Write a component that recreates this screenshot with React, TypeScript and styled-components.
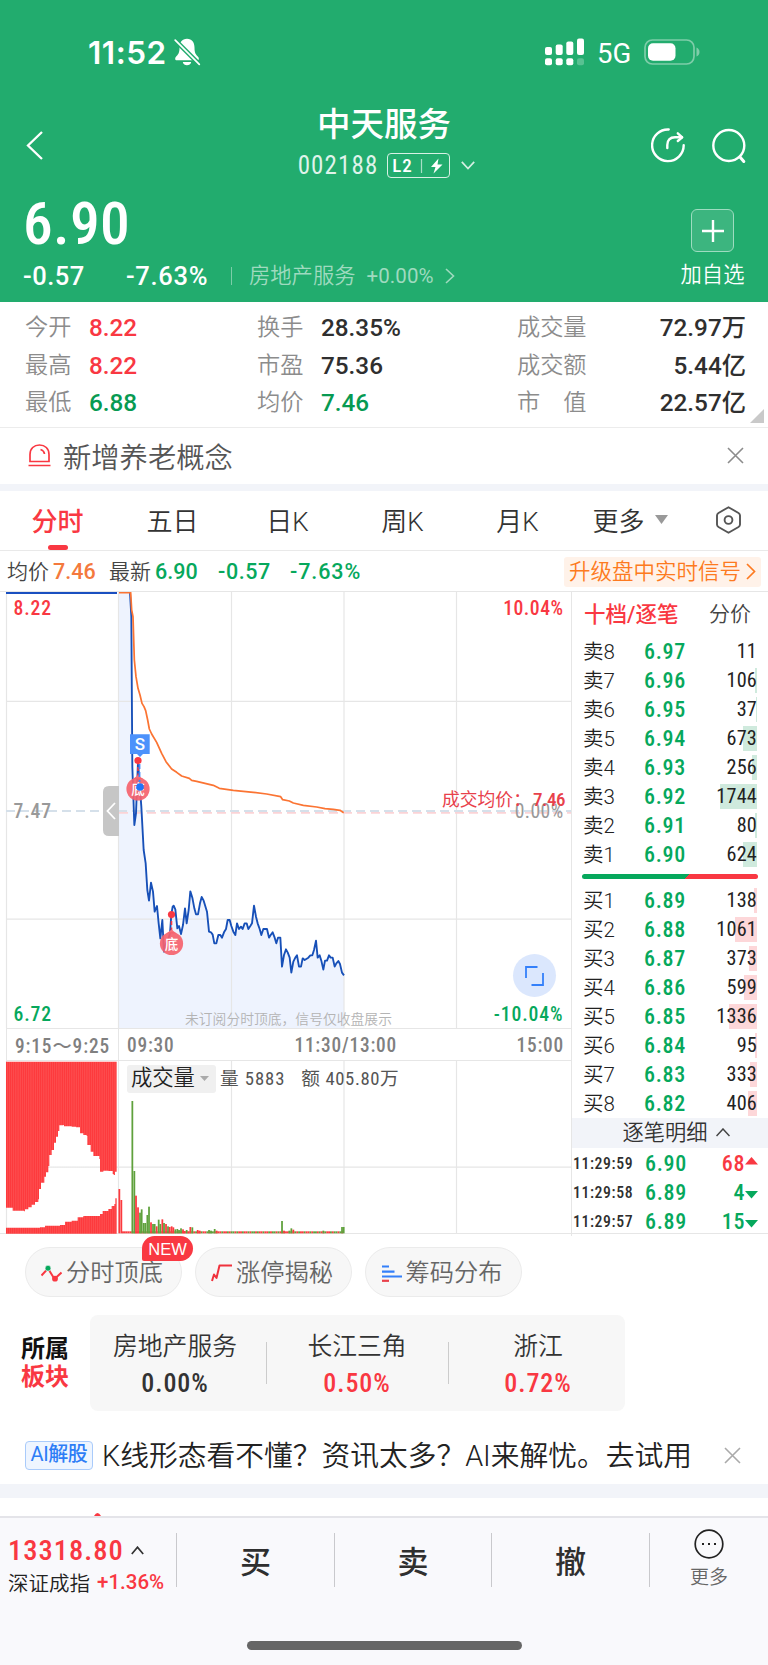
import React from "react";
import styled, { createGlobalStyle, css } from "styled-components";

const RED = "#f93842";
const GREEN = "#06a85c";
const INK = "#2f2f2f";
const GREY = "#8c8c8c";
const LINE = "#e6e6e6";

const GlobalStyle = createGlobalStyle`
  *, *::before, *::after { box-sizing: border-box; }
  body {
    margin: 0;
    background: #fff;
    font-family: Roboto, "Noto Sans CJK SC", sans-serif;
    color: ${INK};
  }
  svg { display: block; flex: none; }
`;

const Screen = styled.main`
  width: 768px;
  height: 1665px;
  display: flex;
  flex-direction: column;
  overflow: hidden;
  background: #fff;
`;

/* Shared text atoms */

const Num = styled.span<{ $size: number; $ls?: number; $color?: string; $weight?: number; $wide?: boolean }>`
  font-stretch: ${(p) => (p.$wide ? "100%" : "75%")};
  font-size: ${(p) => p.$size}px;
  letter-spacing: ${(p) => p.$ls ?? (p.$wide ? 0 : 1)}px;
  font-weight: ${(p) => p.$weight ?? 500};
  color: ${(p) => p.$color ?? "inherit"};
  white-space: nowrap;
`;

/* Header */

const Header = styled.header`
  height: 302px;
  background: #22ac6e;
  color: #fff;
  display: flex;
  flex-direction: column;
`;

const StatusBar = styled.div`
  height: 104px;
  padding: 0 68px 0 88px;
  display: flex;
  align-items: center;
`;

const Clock = styled.span`
  font-family: Inter, sans-serif;
  font-weight: 600;
  font-size: 31.5px;
  letter-spacing: 0.5px;
  line-height: 40px;
  width: 86px;
  padding-top: 2px;
  white-space: nowrap;
`;

const StatusRight = styled.div`
  margin-left: auto;
  display: flex;
  align-items: center;
`;

const Network = styled.span`
  width: 35px;
  font-size: 27.5px;
  line-height: 40px;
  margin: 3px 12px 0 13px;
`;

const TitleBar = styled.div`
  height: 84px;
  padding: 0 22px 0 26px;
  display: grid;
  grid-template-columns: 102px 1fr 106px;
`;

const BackSlot = styled.div`
  padding-top: 27px;
`;

const TitleActions = styled.div`
  display: flex;
  justify-content: flex-end;
  gap: 27px;
  padding-top: 24px;
`;

const TitleBlock = styled.div`
  display: flex;
  flex-direction: column;
  align-items: center;
`;

const StockName = styled.h1`
  margin: 0;
  font-size: 33.5px;
  font-weight: 500;
  line-height: 42px;
`;

const CodeRow = styled.div`
  height: 39px;
  display: flex;
  align-items: center;
  gap: 9px;
  padding-left: 5px;
`;

const LevelBadge = styled.span`
  width: 63px;
  height: 25px;
  border: 1.5px solid #d8f1e5;
  border-radius: 4px;
  display: flex;
  align-items: center;
  padding-left: 4px;
  margin-right: 2px;
`;

const Quote = styled.div`
  flex: 1;
  display: flex;
  justify-content: space-between;
  padding: 0 23px 0 23px;
`;

const QuotePrice = styled.div`
  height: 69px;
  line-height: 73px;
`;

const QuoteChange = styled.div`
  display: flex;
  align-items: center;
  height: 38px;
`;

const ChangeCell = styled.span<{ $w: number }>`
  width: ${(p) => p.$w}px;
`;

const Industry = styled.span`
  display: flex;
  align-items: center;
  border-left: 1px solid #7ccda8;
  height: 18px;
  padding-left: 17px;
  font-size: 21.3px;
  line-height: 24px;
  font-weight: 350;
  color: #9fdabf;
  gap: 11px;
`;

const Watch = styled.div`
  display: flex;
  flex-direction: column;
  align-items: center;
  padding-top: 21px;
  width: 65px;
  font-size: 21.3px;
  font-weight: 350;
  white-space: nowrap;
  line-height: 30px;
  gap: 8px;
`;

const WatchBox = styled.span`
  width: 43px;
  height: 43px;
  border: 1px solid #9edcc0;
  border-radius: 6px;
  background: #3cb57f;
  display: grid;
  place-items: center;
`;

/* Statistics */

const Stats = styled.section`
  height: 126px;
  padding: 7px 22px 0 25px;
  border-bottom: 1.5px solid #ececec;
  position: relative;
`;

const StatRow = styled.div`
  height: 37.5px;
  display: grid;
  grid-template-columns: 64px 168px 64px 196px 1fr;
  align-items: center;
  line-height: 37px;
`;

const StatLabel = styled.span`
  font-size: 23.2px;
  font-weight: 350;
  color: ${GREY};
  white-space: pre;
`;

const StatLast = styled.div`
  display: flex;
  justify-content: space-between;
`;

const Corner = styled.i`
  position: absolute;
  right: 4px;
  bottom: 4px;
  border-left: 14px solid transparent;
  border-bottom: 14px solid #c9c9c9;
`;

/* Notice */

const Notice = styled.section`
  height: 56px;
  padding: 0 24px 2px 28px;
  display: flex;
  align-items: center;
  font-size: 28.3px;
  font-weight: 350;
  color: #555;
  gap: 12px;
  svg:last-child { margin-left: auto; }
`;

const Band = styled.div<{ $h: number }>`
  height: ${(p) => p.$h}px;
  flex: none;
  background: #f2f4f9;
`;

/* Tabs */

const Tabs = styled.nav`
  height: 60px;
  border-bottom: 1.5px solid #e9e9e9;
  display: grid;
  grid-template-columns: 115px 115px 115px 115px 115px 110px 87px;
`;

const Tab = styled.span<{ $on?: boolean }>`
  display: flex;
  justify-content: center;
  align-items: center;
  gap: 10px;
  padding-bottom: 2px;
  position: relative;
  font-size: 26px;
  font-weight: ${(p) => (p.$on ? 500 : 350)};
  color: ${(p) => (p.$on ? RED : "#333")};
  white-space: nowrap;
  ${(p) =>
    p.$on &&
    css`
      &::after {
        content: "";
        position: absolute;
        bottom: 0;
        width: 20px;
        height: 5px;
        border-radius: 3px;
        background: ${RED};
      }
    `}
`;

const InfoBar = styled.div`
  height: 41px;
  padding: 2px 7px 0 7px;
  display: flex;
  align-items: center;
  border-bottom: 1px solid ${LINE};
  font-size: 21px;
  font-weight: 350;
  line-height: 24px;
  color: #444;
  white-space: nowrap;
`;

const InfoCell = styled.span<{ $w: number }>`
  width: ${(p) => p.$w}px;
  display: flex;
  gap: 4px;
`;

const Upgrade = styled.span`
  margin-left: auto;
  width: 197px;
  height: 30px;
  border-radius: 3px;
  background: #fff2e9;
  color: #fd7a20;
  font-size: 21.5px;
  padding: 0 5px 1px 5px;
  display: flex;
  justify-content: space-between;
  align-items: center;
`;

/* Chart area */

const Market = styled.section`
  height: 642px;
  display: grid;
  grid-template-columns: 571px 197px;
  border-bottom: 1px solid ${LINE};
`;

const Charts = styled.div`
  display: flex;
  flex-direction: column;
  position: relative;
`;

const Axis = styled.div`
  height: 33px;
  margin-left: 6px;
  border: 1px solid ${LINE};
  border-right: 0;
  display: flex;
  align-items: stretch;
  color: #808080;
`;

const AuctionSpan = styled.span`
  width: 112px;
  display: flex;
  align-items: center;
  justify-content: center;
  border-right: 1px solid ${LINE};
`;

const SessionSpan = styled.span`
  flex: 1;
  display: flex;
  align-items: center;
  padding: 1px 7px 0 8px;
`;

const MiddayMark = styled.span`
  margin: 0 auto 0 120px;
`;

const VolumeLegend = styled.div`
  position: absolute;
  left: 127px;
  top: 473px;
  height: 28px;
  display: flex;
  align-items: center;
  color: #555;
  font-size: 18px;
  line-height: 24px;
  gap: 16px;
`;

const VolumePick = styled.span`
  width: 89px;
  height: 28px;
  border-radius: 3px;
  background: #f0f0f0;
  color: #222;
  font-size: 21.3px;
  font-weight: 350;
  display: flex;
  align-items: center;
  gap: 5px;
  padding: 0 0 2px 4px;
  margin-right: -12px;
`;

const Book = styled.aside`
  border-left: 1px solid ${LINE};
  display: flex;
  flex-direction: column;
`;

const BookTabs = styled.div`
  height: 45px;
  padding: 0 17px 5px 12px;
  display: flex;
  justify-content: space-between;
  align-items: center;
  font-size: 21px;
  font-weight: 350;
  color: #444;
  b { font-weight: 500; color: ${RED}; font-size: 21.5px; }
`;

const Level = styled.div`
  height: 29px;
  margin: 0 11px 0 11px;
  display: grid;
  grid-template-columns: 61px 1fr 62px;
  align-items: center;
  font-size: 20.5px;
  font-weight: 350;
  line-height: 26px;
  color: #222;
  white-space: nowrap;
`;

const Depth = styled.span<{ $buy?: boolean; $w: number }>`
  height: 25px;
  line-height: 25px;
  text-align: right;
  background: linear-gradient(${(p) => (p.$buy ? "#fdd7d9, #fdd7d9" : "#cfeadd, #cfeadd")}) right / ${(p) => p.$w}px 100% no-repeat;
`;

const Ratio = styled.div`
  height: 5px;
  flex: none;
  margin: 5px 10px 7px 10px;
  border-radius: 3px;
  background: linear-gradient(135deg, ${GREEN} 59.5%, ${RED} 59.5%);
`;

const TickHead = styled.div`
  height: 30px;
  margin-bottom: 1px;
  background: #f2f4f9;
  display: flex;
  align-items: center;
  justify-content: center;
  gap: 8px;
  font-size: 21.3px;
  font-weight: 350;
  line-height: 28px;
  color: #333;
  padding: 0 0 1px 12px;
`;

const Tick = styled.div`
  height: 29px;
  padding: 0 10px 0 1px;
  display: grid;
  grid-template-columns: 72px 62px 1fr;
  align-items: center;
`;

const TickVol = styled.span`
  display: flex;
  align-items: center;
  justify-content: flex-end;
`;

/* Chips */

const Chips = styled.section`
  height: 64px;
  padding: 13px 25px 0;
  display: flex;
  gap: 13px;
`;

const Chip = styled.span`
  width: 157px;
  height: 50px;
  border: 1.5px solid #ebebeb;
  border-radius: 25px;
  background: #f7f7f7;
  display: flex;
  align-items: center;
  justify-content: center;
  gap: 4px;
  font-size: 24.2px;
  font-weight: 350;
  line-height: 34px;
  color: #666;
  position: relative;
  white-space: nowrap;
  padding: 2px 3px 0 0;
`;

const NewTag = styled.span`
  position: absolute;
  left: 116px;
  top: -12px;
  width: 51px;
  height: 25px;
  border-radius: 13px 13px 13px 2px;
  background: ${RED};
  color: #fff;
  font: 400 16.5px/26px "Liberation Sans", sans-serif;
  text-align: center;
`;

/* Sector */

const Sector = styled.section`
  height: 129px;
  padding: 17px 0 0 21px;
  display: flex;
`;

const SectorTitle = styled.div`
  width: 69px;
  padding-top: 20px;
  font-size: 24px;
  font-weight: 700;
  line-height: 28px;
  color: #111;
  em { font-style: normal; color: ${RED}; display: block; }
`;

const SectorCard = styled.div`
  width: 535px;
  height: 96px;
  border-radius: 8px;
  background: #f7f7f7;
  display: grid;
  grid-template-columns: 176px 182px 1fr;
`;

const SectorItem = styled.div`
  display: flex;
  flex-direction: column;
  align-items: center;
  padding-top: 13px;
  font-size: 24.8px;
  font-weight: 350;
  line-height: 37px;
  color: #333;
  position: relative;
  &:nth-child(1) { padding-right: 6px; }
  &:nth-child(3) { padding-left: 3px; }
  & + &::before {
    content: "";
    position: absolute;
    left: 0;
    top: 27px;
    height: 42px;
    border-left: 1px solid #ccc;
  }
`;

/* AI promo */

const Promo = styled.section`
  height: 57px;
  padding: 0 27px 1px 25px;
  display: flex;
  align-items: center;
  font-size: 28.75px;
  font-weight: 350;
  line-height: 34px;
  color: #222;
  white-space: nowrap;
  svg { margin-left: auto; }
`;

const PromoText = styled.span`
  padding-top: 2px;
`;

const PromoTag = styled.span`
  width: 68px;
  height: 29px;
  border: 1.5px solid #a9cbfb;
  border-radius: 4px;
  background: #eef5ff;
  color: #2d7df6;
  font-size: 20px;
  font-weight: 450;
  line-height: 25px;
  text-align: center;
  margin-right: 9px;
  letter-spacing: -0.4px;
`;

const Peek = styled.div`
  height: 18px;
  display: flex;
  align-items: flex-end;
  padding-left: 94px;
`;

/* Trade bar */

const TradeBar = styled.footer`
  flex: 1;
  border-top: 2px solid #e4e4e9;
  background: #f9f9fc;
  display: flex;
  flex-direction: column;
  align-items: center;
`;

const TradeRow = styled.div`
  width: 768px;
  height: 84px;
  display: grid;
  grid-template-columns: 176px 158px 157px 158px 1fr;
`;

const IndexBox = styled.div`
  padding: 14px 0 0 8px;
  font-size: 20.5px;
  font-weight: 350;
  color: #222;
  white-space: nowrap;
`;

const IndexLine = styled.div<{ $h: number }>`
  height: ${(p) => p.$h}px;
  display: flex;
  align-items: center;
  gap: 7px;
`;

const TradeCell = styled.div`
  margin-top: 15px;
  height: 54px;
  border-left: 1px solid #c9c9cd;
  display: flex;
  align-items: center;
  justify-content: center;
  padding-bottom: 2px;
  font-size: 31px;
  font-weight: 500;
`;

const MoreCell = styled(TradeCell)`
  flex-direction: column;
  gap: 6px;
  padding-bottom: 0;
  font-size: 19px;
  font-weight: 350;
  line-height: 26px;
  color: #666;
`;

const HomeBar = styled.div`
  margin-top: 39px;
  width: 275px;
  height: 9px;
  border-radius: 5px;
  background: #666;
`;

/* Data */

const asks: [string, string, number, number][] = [
  ["卖8", "6.97", 11, 0],
  ["卖7", "6.96", 106, 2],
  ["卖6", "6.95", 37, 1],
  ["卖5", "6.94", 673, 14],
  ["卖4", "6.93", 256, 5],
  ["卖3", "6.92", 1744, 37],
  ["卖2", "6.91", 80, 2],
  ["卖1", "6.90", 624, 14],
];

const bids: [string, string, number, number][] = [
  ["买1", "6.89", 138, 3],
  ["买2", "6.88", 1061, 22],
  ["买3", "6.87", 373, 8],
  ["买4", "6.86", 599, 13],
  ["买5", "6.85", 1336, 28],
  ["买6", "6.84", 95, 2],
  ["买7", "6.83", 333, 7],
  ["买8", "6.82", 406, 9],
];

const ticks: [string, string, number, boolean][] = [
  ["11:29:59", "6.90", 68, true],
  ["11:29:58", "6.89", 4, false],
  ["11:29:57", "6.89", 15, false],
];

const PRICE =
  "390,38 394,110 397,560 403,735 408,700 414,545 418,600 424,680 431,810 437,850 442,930 447,962 453,908 459,935 464,995 471,978 476,1030 481,1075 487,1020 492,1115 498,1090 504,1080 510,1060 514,1003 518,980 521,977 526,988 532,1045 537,1038 543,1062 549,1035 555,985 560,1030 566,990 571,934 577,953 583,985 588,1003 594,1003 600,970 605,951 611,962 621,995 627,1055 633,1057 638,1064 643,1090 649,1090 655,1065 661,1065 666,1073 672,1057 678,1047 683,1020 689,1020 694,1038 700,1055 706,1065 711,1030 717,1047 723,1040 728,1047 734,1030 740,1030 745,1047 751,1038 756,1030 762,977 768,1010 773,1030 779,1047 784,1065 790,1047 801,1047 807,1073 812,1065 818,1057 824,1073 829,1090 834,1073 841,1073 846,1160 852,1125 858,1108 863,1117 869,1133 874,1178 880,1145 886,1133 891,1126 897,1160 903,1160 908,1135 914,1140 925,1133 931,1126 937,1126 942,1110 948,1082 953,1133 959,1126 964,1142 970,1169 975,1142 981,1142 987,1126 992,1133 998,1133 1004,1160 1009,1150 1015,1143 1020,1152 1026,1178 1032,1186";

const AVERAGE =
  "357,38 392,38 395,90 399,110 403,240 408,290 414,325 420,345 426,370 432,380 437,392 443,420 448,447 455,462 470,487 485,520 498,545 515,567 530,577 545,588 568,595 575,601 590,604 640,616 658,625 700,631 760,637 800,642 842,650 848,659 868,663 880,669 910,676 950,681 975,686 1000,688 1020,691 1031,698";

type Pt = [number, number];

const auctionTop: Pt[] = [
  [18, 563], [38, 572], [72, 574], [75, 568], [85, 562], [95, 554], [105, 546], [115, 538], [117, 507], [123, 488],
  [133, 470], [138, 457], [145, 438], [148, 405], [155, 390], [162, 368], [168, 350], [174, 333], [178, 316], [190, 315],
  [192, 319], [215, 320], [228, 322], [238, 322], [240, 340], [250, 345], [260, 348], [262, 375], [272, 395], [280, 408],
  [298, 417], [300, 455], [310, 452], [325, 453], [338, 462], [341, 465], [345, 455], [350, 452],
];

const auctionBottom: Pt[] = [
  [18, 623], [50, 623], [120, 622], [135, 617], [180, 615], [195, 605], [215, 602], [233, 592], [250, 588],
  [300, 582], [308, 573], [325, 567], [335, 558], [343, 552], [346, 535], [350, 535],
];

const stepPath = (pts: Pt[], base: number) => {
  let d = `M${pts[0][0]},${base}`;
  pts.forEach(([x, y], i) => {
    d += `L${x},${y}`;
    if (pts[i + 1]) d += `L${pts[i + 1][0]},${y}`;
  });
  return `${d}L${pts[pts.length - 1][0]},${base}Z`;
};

const VOL: [number, number, "r" | "g"][] = [
  [358, 507, "r"], [364, 540, "r"], [397, 243, "g"], [403, 453, "g"], [408, 527, "r"], [414, 562, "r"],
  [420, 578, "g"], [425, 568, "g"], [431, 609, "g"], [436, 609, "g"], [442, 585, "g"], [447, 560, "g"],
  [453, 607, "r"], [459, 612, "g"], [464, 612, "g"], [470, 619, "r"], [476, 599, "g"], [481, 612, "g"],
  [487, 598, "r"], [492, 609, "g"], [498, 612, "r"], [504, 619, "g"], [509, 621, "r"], [515, 619, "r"],
  [520, 622, "r"], [526, 628, "g"], [532, 627, "g"], [537, 630, "g"], [543, 625, "g"], [549, 628, "r"],
  [554, 633, "r"], [560, 630, "g"], [565, 635, "r"], [571, 621, "r"], [577, 622, "g"], [593, 630, "r"],
  [599, 632, "r"], [627, 630, "g"], [633, 632, "g"], [644, 627, "g"], [650, 632, "r"], [846, 603, "g"],
  [852, 632, "r"], [868, 632, "g"], [874, 625, "g"], [880, 629, "r"], [970, 632, "g"], [1026, 621, "g"],
  [1031, 621, "g"],
];

const quiet = Array.from({ length: 118 }, (_, i) => {
  const x = 369 + i * 5.62;
  return { x, red: x < 392 || (i * 7) % 11 < 6 };
});

const Caret = ({ w, h, d, color, sw = 2 }: { w: number; h: number; d: string; color: string; sw?: number }) => (
  <svg width={w} height={h} viewBox={`0 0 ${w} ${h}`} fill="none" stroke={color} strokeWidth={sw}>
    <path d={d} />
  </svg>
);

const Close = ({ color }: { color: string }) => <Caret w={17} h={17} color={color} sw={1.6} d="M1 1L16 16M16 1L1 16" />;

const Bottom = ({ x, y, tip }: { x: number; y: number; tip: number }) => (
  <g>
    <line x1={x} y1={tip} x2={x} y2={y - 10} stroke={RED} strokeWidth="1.6" strokeDasharray="4 2.5" />
    <path d={`M${x - 5} ${y - 10}L${x} ${y - 14}L${x + 5} ${y - 10}Z`} fill="#f7707a" />
    <circle cx={x} cy={y} r="11.6" fill="#f5636e" fillOpacity="0.92" />
    <text x={x} y={y + 5} fontSize="13.5" fontWeight="500" fill="#fff" textAnchor="middle">
      底
    </text>
    <circle cx={x} cy={tip} r="3.6" fill={RED} />
  </g>
);

const Label = styled.text<{ $ls?: number; $size?: number; $weight?: number }>`
  font-stretch: 75%;
  font-weight: ${(p) => p.$weight ?? 500};
  font-size: ${(p) => p.$size ?? 19.7}px;
  letter-spacing: ${(p) => p.$ls ?? 0.9}px;
`;

const PriceChart = () => (
  <svg width="571" height="436" viewBox="0 0 571 436">
    <polygon
      transform="translate(0 -12) scale(0.33333)"
      points={`357,38 ${PRICE} 1032,1344 357,1344`}
      fill="#eef3fe"
    />
    <g stroke={LINE} strokeWidth="1.2">
      <path d="M6.5 0V436M118.5 0V436M231.5 0V436M344 0V436M456.5 0V436M6 109.3H571M6 327.2H571" fill="none" />
    </g>
    <path d="M6 219H571" stroke="#d5e0ea" strokeWidth="1.8" strokeDasharray="9 5" />
    <path d="M119 220.8H571" stroke="#fbd3d6" strokeWidth="1.8" strokeDasharray="9 5" />
    <path d="M6 0.8H117" stroke="#1a4fc0" strokeWidth="2.6" />
    <g transform="translate(0 -12) scale(0.33333)" fill="none" strokeLinejoin="round">
      <polyline points={PRICE} stroke="#1750b8" strokeWidth="5.6" />
      <polyline points={AVERAGE} stroke="#fb7433" strokeWidth="5.2" />
    </g>
    <path d="M119 194V244H109Q103 244 103 238V200Q103 194 109 194Z" fill="#c6c6c6" />
    <path d="M115 211L107.5 219L115 227" fill="none" stroke="#fff" strokeWidth="1.8" />
    <Bottom x={138} y={197} tip={168.5} />
    <path d="M139.5 172V190" stroke="#3f87fb" strokeWidth="1.8" strokeDasharray="5 3" />
    <circle cx="140" cy="195" r="3.8" fill="#1f74fa" />
    <path d="M130 142.3H149.7V162H143L140 165L137 162H130Z" fill="#4c92fb" />
    <text x="140" y="158" fontSize="17" fontWeight="500" fill="#fff" textAnchor="middle">
      S
    </text>
    <Bottom x={171.5} y={351.5} tip={322.5} />
    <Label x="13.5" y="23" fill={RED}>8.22</Label>
    <Label x="563.5" y="23" fill={RED} textAnchor="end" $ls={0.5}>10.04%</Label>
    <Label x="13.5" y="226" fill="#999">7.47</Label>
    <Label x="563.5" y="226" fill="#999" textAnchor="end" $ls={0.4} $weight={400}>0.00%</Label>
    <Label x="13.5" y="428.5" fill={GREEN}>6.72</Label>
    <Label x="563.5" y="428.5" fill={GREEN} textAnchor="end">-10.04%</Label>
    <text x="442" y="214" fontSize="17.8" fontWeight="400" fill="#e8414b">成交均价：</text>
    <Label x="533" y="213.5" fill="#e8414b" $size={19} $ls={-0.4}>7.46</Label>
    <text x="185" y="432" fontSize="13.8" fontWeight="350" fill="#b4b4b4">
      未订阅分时顶底，信号仅收盘展示
    </text>
    <circle cx="534.5" cy="383.5" r="21.5" fill="#dbe7fd" />
    <path d="M526 386V375H537.5M543 381V393H531.5" fill="none" stroke="#3480fa" strokeWidth="1.8" />
  </svg>
);

const VolumeChart = () => (
  <svg width="571" height="173" viewBox="0 0 571 173">
    <path d="M6.5 0V173M118.5 0V173M231.5 0V173M344 0V173M456.5 0V173M6 106.2H571" fill="none" stroke={LINE} strokeWidth="1.2" />
    <g transform="translate(0 -41) scale(0.33333)">
      <path d={stepPath(auctionTop, 125)} fill="#fd3a3d" />
      <path d={stepPath(auctionBottom, 641)} fill="#fd3a3d" />
      {Array.from({ length: 59 }, (_, i) => (
        <rect key={i} x={22.5 + i * 5.6} y="125" width="1.2" height="516" fill="#fff" fillOpacity="0.22" />
      ))}
      {quiet.map((q, i) => (
        <rect key={i} x={q.x - 2.8} y="634" width="5.62" height="6" fill={q.red ? "#fb3a3e" : "#5fa13c"} />
      ))}
      {VOL.map(([x, y, c], i) => (
        <rect key={i} x={x - 2.6} y={y} width="5.3" height={640 - y} fill={c === "r" ? "#fb3a3e" : "#5fa13c"} />
      ))}
    </g>
  </svg>
);

const Levels = ({ rows, buy }: { rows: typeof asks; buy?: boolean }) => (
  <>
    {rows.map(([name, price, vol, w]) => (
      <Level key={name}>
        <span>{name}</span>
        <Num $size={22} $ls={0.7} $color={GREEN}>{price}</Num>
        <Depth $buy={buy} $w={w}>
          <Num $size={20.2} $ls={0.2} $weight={400} $color="#222">{vol}</Num>
        </Depth>
      </Level>
    ))}
  </>
);

export default function App() {
  return (
    <Screen>
      <GlobalStyle />
      <Header>
        <StatusBar>
          <Clock>11:52</Clock>
          <svg width="27" height="28" viewBox="0 0 27 28">
            <path
              d="M13 0.800C8 0.800 5.500 4.500 5.500 9.500C5.500 15 4.200 16.500 1.800 19C0.600 20.600 1.200 22.300 3 22.300H23C24.800 22.300 25.400 20.600 24.200 19C21.800 16.500 20.500 15 20.500 9.500C20.500 4.500 18 0.800 13 0.800ZM8.800 24H17.200C16.500 28.300 9.500 28.300 8.800 24Z"
              fill="#fff"
            />
            <path d="M0 1L26.500 27.500" stroke="#22ac6e" strokeWidth="4.600" />
            <path d="M1.200 2.200L25.300 26.300" stroke="#fff" strokeWidth="1.700" strokeLinecap="round" />
          </svg>
          <StatusRight>
            <svg width="39" height="28" viewBox="0 0 39 28" fill="#fff">
              <rect x="0" y="9" width="7" height="8" rx="2" />
              <rect x="10.700" y="6.500" width="7" height="10.500" rx="2" />
              <rect x="21.300" y="3.500" width="7" height="13.500" rx="2" />
              <rect x="32" y="0.500" width="7" height="16.500" rx="2" />
              <rect x="0" y="20.300" width="7" height="7" rx="2" />
              <rect x="10.700" y="20.300" width="7" height="7" rx="2" />
              <rect x="21.300" y="20.300" width="7" height="7" rx="2" />
              <rect x="32" y="20.300" width="7" height="7" rx="2" fillOpacity="0.25" />
            </svg>
            <Network>5G</Network>
            <svg width="56" height="26" viewBox="0 0 56 26">
              <rect x="1" y="1" width="49" height="24" rx="7.500" fill="none" stroke="#7ecda9" strokeWidth="1.700" />
              <rect x="4" y="4.300" width="27.500" height="17.400" rx="5" fill="#fff" />
              <path d="M52.500 8.500Q55.500 10 55.500 13Q55.500 16 52.500 17.500Z" fill="#7ecda9" />
            </svg>
          </StatusRight>
        </StatusBar>

        <TitleBar>
          <BackSlot>
            <Caret w={18} h={29} color="#fff" sw={2.3} d="M16 1L2 14.500L16 28" />
          </BackSlot>
          <TitleBlock>
            <StockName>中天服务</StockName>
            <CodeRow>
              <Num $size={25} $ls={1.1} $weight={400} $color="#dff3ea">002188</Num>
              <LevelBadge>
                <Num $size={19} $ls={0.8}>L2</Num>
                <svg width="34" height="18" viewBox="0 0 34 18">
                  <path d="M8.500 2V16" stroke="#a8dfc6" strokeWidth="1.200" />
                  <path d="M25.500 1.500L18 10H22.500L20.500 16.500L29.500 7.500H24.500Z" fill="#fff" />
                </svg>
              </LevelBadge>
              <Caret w={14} h={9} color="#d4efe2" sw={1.700} d="M0.800 0.800L7 7.500L13.200 0.800" />
            </CodeRow>
          </TitleBlock>
          <TitleActions>
            <svg width="34" height="35" viewBox="0 0 34 35" fill="none" stroke="#fff" strokeWidth="2.400" strokeLinecap="round">
              <path d="M17.700 1.500A15.800 15.800 0 1 0 32.700 17.300" />
              <path d="M16.300 20V17Q16.300 9.300 24 9.300H31" />
              <path d="M26.800 5.300L31.200 9.300L26.800 13" strokeLinejoin="round" />
            </svg>
            <svg width="34" height="36" viewBox="0 0 34 36" fill="none" stroke="#fff" strokeWidth="2.400" strokeLinecap="round">
              <circle cx="16.800" cy="17.500" r="15.500" />
              <path d="M28 29L31.800 33.500" strokeWidth="3" />
            </svg>
          </TitleActions>
        </TitleBar>

        <Quote>
          <div>
            <QuotePrice>
              <Num $size={59.5} $ls={0.3}>6.90</Num>
            </QuotePrice>
            <QuoteChange>
              <ChangeCell $w={103}>
                <Num $wide $size={25.5} $ls={0.5}>-0.57</Num>
              </ChangeCell>
              <ChangeCell $w={105}>
                <Num $wide $size={25.5} $ls={0.7}>-7.63%</Num>
              </ChangeCell>
              <Industry>
                房地产服务
                <Num $wide $size={20.5} $ls={0.1} $weight={400}>+0.00%</Num>
                <Caret w={10} h={16} color="#9fdabf" sw={1.600} d="M1 1L8.500 8L1 15" />
              </Industry>
            </QuoteChange>
          </div>
          <Watch>
            <WatchBox>
              <Caret w={22} h={22} color="#fff" sw={2.400} d="M11 0V22M0 11H22" />
            </WatchBox>
            加自选
          </Watch>
        </Quote>
      </Header>

      <Stats>
        <StatRow>
          <StatLabel>今开</StatLabel>
          <Num $wide $size={24.3} $color={RED}>8.22</Num>
          <StatLabel>换手</StatLabel>
          <Num $wide $size={24.3}>28.35%</Num>
          <StatLast>
            <StatLabel>成交量</StatLabel>
            <Num $wide $size={24.3}>72.97万</Num>
          </StatLast>
        </StatRow>
        <StatRow>
          <StatLabel>最高</StatLabel>
          <Num $wide $size={24.3} $color={RED}>8.22</Num>
          <StatLabel>市盈</StatLabel>
          <Num $wide $size={24.3}>75.36</Num>
          <StatLast>
            <StatLabel>成交额</StatLabel>
            <Num $wide $size={24.3}>5.44亿</Num>
          </StatLast>
        </StatRow>
        <StatRow>
          <StatLabel>最低</StatLabel>
          <Num $wide $size={24.3} $color="#079a52">6.88</Num>
          <StatLabel>均价</StatLabel>
          <Num $wide $size={24.3} $color="#079a52">7.46</Num>
          <StatLast>
            <StatLabel>市　值</StatLabel>
            <Num $wide $size={24.3}>22.57亿</Num>
          </StatLast>
        </StatRow>
        <Corner />
      </Stats>

      <Notice>
        <svg width="23" height="23" viewBox="0 0 23 23" fill="none" stroke={RED} strokeWidth="1.700">
          <path d="M2 17.500V10.500C2 4.500 6 1 11.500 1S21 4.500 21 10.500V17.500ZM0.500 21.500H22.500" />
          <path d="M12.500 5.500Q16 6.500 16.500 10" />
        </svg>
        新增养老概念
        <Close color={GREY} />
      </Notice>
      <Band $h={7} />

      <Tabs>
        <Tab $on>分时</Tab>
        <Tab>五日</Tab>
        <Tab>日K</Tab>
        <Tab>周K</Tab>
        <Tab>月K</Tab>
        <Tab>
          更多
          <svg width="13" height="9" viewBox="0 0 13 9">
            <path d="M0 0H13L6.500 9Z" fill="#999" />
          </svg>
        </Tab>
        <Tab>
          <svg width="27" height="28" viewBox="0 0 27 28" fill="none" stroke="#555" strokeWidth="1.900">
            <path d="M13.500 1.200L23.500 7Q25 8 25 9.500V18.500Q25 20 23.500 21L13.500 26.800L3.500 21Q2 20 2 18.500V9.500Q2 8 3.500 7Z" strokeLinejoin="round" />
            <circle cx="13.500" cy="14" r="3.900" />
          </svg>
        </Tab>
      </Tabs>

      <InfoBar>
        <InfoCell $w={102}>
          均价<Num $wide $size={21.5} $color="#f4793d">7.46</Num>
        </InfoCell>
        <InfoCell $w={109}>
          最新<Num $wide $size={21.5} $color={GREEN}>6.90</Num>
        </InfoCell>
        <InfoCell $w={72}>
          <Num $wide $size={21.5} $ls={0.6} $color={GREEN}>-0.57</Num>
        </InfoCell>
        <Num $wide $size={21.5} $ls={0.9} $color={GREEN}>-7.63%</Num>
        <Upgrade>
          升级盘中实时信号
          <Caret w={10} h={17} color="#fd7a20" sw={1.700} d="M1 1L8.500 8.500L1 16" />
        </Upgrade>
      </InfoBar>

      <Market>
        <Charts>
          <PriceChart />
          <Axis>
            <AuctionSpan>
              <Num $size={19.3} $ls={0.9}>9:15～9:25</Num>
            </AuctionSpan>
            <SessionSpan>
              <Num $size={19.3} $ls={0.8}>09:30</Num>
              <MiddayMark>
                <Num $size={19.3} $ls={0.8}>11:30/13:00</Num>
              </MiddayMark>
              <Num $size={19.3} $ls={0.8}>15:00</Num>
            </SessionSpan>
          </Axis>
          <VolumeChart />
          <VolumeLegend>
            <VolumePick>
              成交量
              <svg width="9" height="5" viewBox="0 0 9 5">
                <path d="M0 0H9L4.500 5Z" fill="#aaa" />
              </svg>
            </VolumePick>
            <Num $size={18.7} $ls={0.9} $weight={400}>量 5883</Num>
            <Num $size={18.7} $ls={0.6} $weight={400}>额 405.80万</Num>
          </VolumeLegend>
        </Charts>
        <Book>
          <BookTabs>
            <b>十档/逐笔</b>
            <span>分价</span>
          </BookTabs>
          <Levels rows={asks} />
          <Ratio />
          <Levels rows={bids} buy />
          <TickHead>
            逐笔明细
            <Caret w={14} h={9} color="#444" sw={1.500} d="M0.500 8L7 1L13.500 8" />
          </TickHead>
          {ticks.map(([time, price, vol, up]) => (
            <Tick key={time}>
              <Num $size={15.8} $ls={0.6}>{time}</Num>
              <Num $size={22} $ls={0.7} $color={GREEN}>{price}</Num>
              <TickVol>
                <Num $size={22} $ls={0.6} $color={up ? RED : GREEN}>{vol}</Num>
                <svg width="13" height="17" viewBox="0 0 13 17">
                  <path d={up ? "M0 9.500L6.500 2L13 9.500Z" : "M0 7H13L6.500 14.500Z"} fill={up ? RED : GREEN} />
                </svg>
              </TickVol>
            </Tick>
          ))}
        </Book>
      </Market>

      <Chips>
        <Chip>
          <svg width="21" height="17" viewBox="0 0 21 17">
            <path d="M0.500 10.500L7 3.500L13.500 14L20.500 7.500" fill="none" stroke={RED} strokeWidth="2" />
            <circle cx="7" cy="3.200" r="2.900" fill={GREEN} stroke="#f7f7f7" strokeWidth="0.600" />
            <circle cx="14" cy="13.700" r="2.900" fill={RED} />
          </svg>
          分时顶底
          <NewTag>NEW</NewTag>
        </Chip>
        <Chip>
          <svg width="21" height="18" viewBox="0 0 21 18" fill="none" stroke="#f0323d" strokeWidth="2">
            <path d="M1 17L3 10.500L5.500 14L8.500 1.500H21" strokeLinejoin="round" />
          </svg>
          涨停揭秘
        </Chip>
        <Chip>
          <svg width="20" height="17" viewBox="0 0 20 17" strokeWidth="2.200">
            <path d="M0 1.500H7M0 6.700H12.500M0 11.500H20" stroke="#3480fa" />
            <path d="M0 15.800H7" stroke="#e8414b" />
          </svg>
          筹码分布
        </Chip>
      </Chips>

      <Sector>
        <SectorTitle>
          所属<em>板块</em>
        </SectorTitle>
        <SectorCard>
          <SectorItem>
            房地产服务
            <Num $size={26} $ls={0.9}>0.00%</Num>
          </SectorItem>
          <SectorItem>
            长江三角
            <Num $size={26} $ls={0.9} $color={RED}>0.50%</Num>
          </SectorItem>
          <SectorItem>
            浙江
            <Num $size={26} $ls={0.9} $color={RED}>0.72%</Num>
          </SectorItem>
        </SectorCard>
      </Sector>

      <Promo>
        <PromoTag>AI解股</PromoTag>
        <PromoText>K线形态看不懂？资讯太多？AI来解忧。去试用</PromoText>
        <Close color="#aaa" />
      </Promo>
      <Band $h={14} />
      <Peek>
        <svg width="7" height="3" viewBox="0 0 7 3">
          <path d="M0 3Q3.500 -3 7 3Z" fill={RED} />
        </svg>
      </Peek>

      <TradeBar>
        <TradeRow>
          <IndexBox>
            <IndexLine $h={36}>
              <Num $size={28.5} $ls={1} $color={RED}>13318.80</Num>
              <Caret w={13} h={9} color="#333" sw={1.700} d="M0.800 8L6.500 1.200L12.200 8" />
            </IndexLine>
            <IndexLine $h={28}>
              深证成指
              <Num $wide $size={20.5} $color={RED}>+1.36%</Num>
            </IndexLine>
          </IndexBox>
          <TradeCell>买</TradeCell>
          <TradeCell>卖</TradeCell>
          <TradeCell>撤</TradeCell>
          <MoreCell>
            <svg width="30" height="30" viewBox="0 0 30 30" fill="none" stroke="#222" strokeWidth="1.700">
              <circle cx="15" cy="15" r="13.800" />
              <path d="M8 15H10M14 15H16M20 15H22" strokeWidth="2.200" />
            </svg>
            更多
          </MoreCell>
        </TradeRow>
        <HomeBar />
      </TradeBar>
    </Screen>
  );
}
